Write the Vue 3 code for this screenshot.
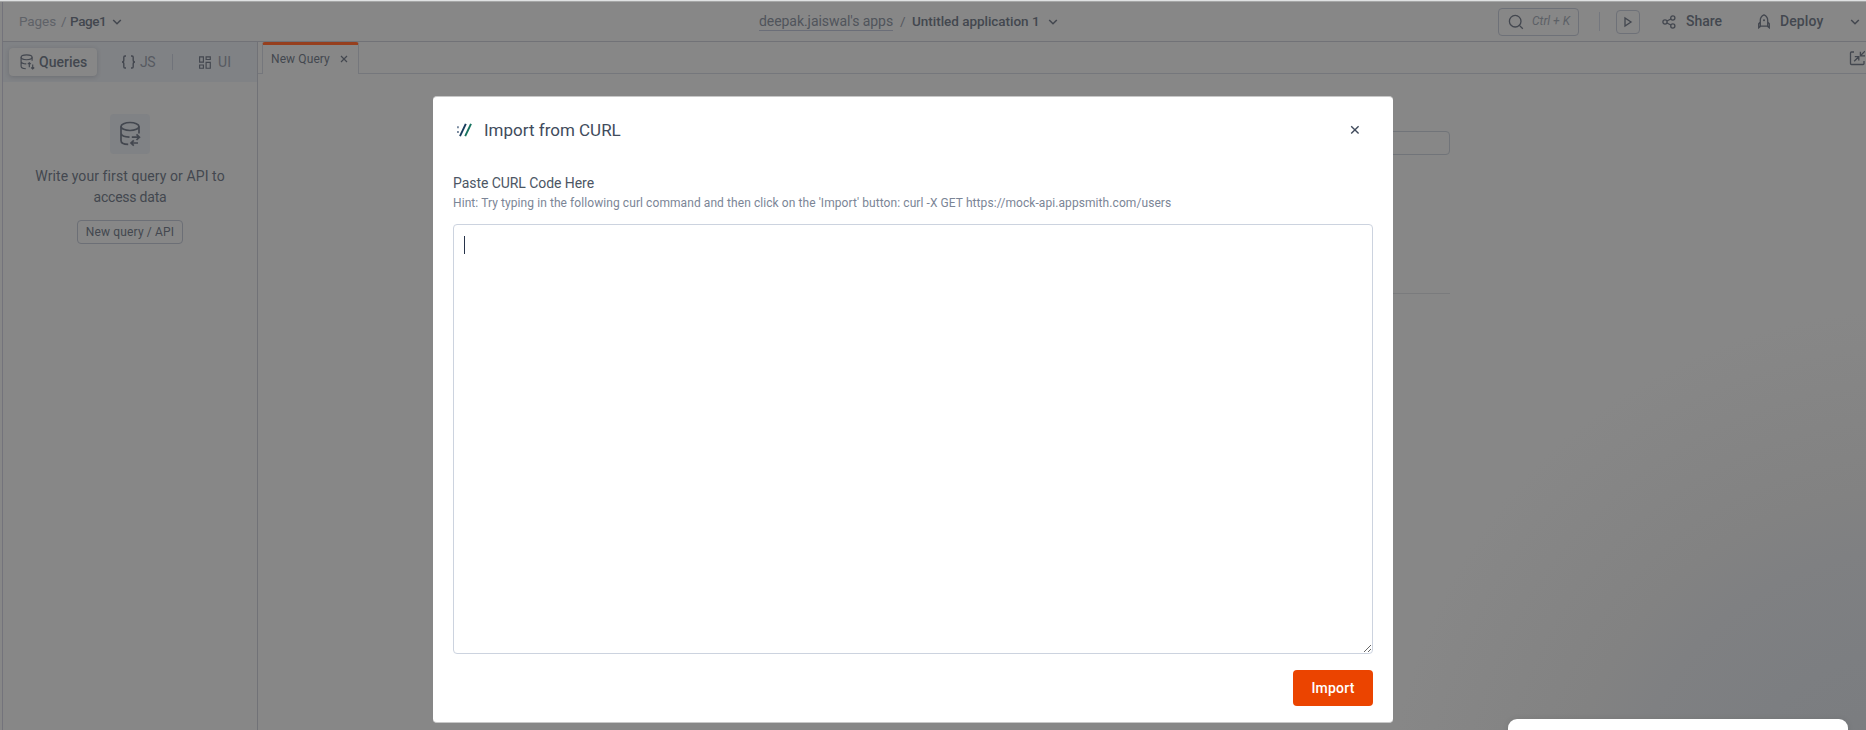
<script setup>
import { ref } from 'vue'
const code = ref('')
</script>

<template>
  <div class="app">
    <div class="edge"></div>
    <header class="header">
      <div class="crumbs">
        <span class="pages">Pages</span><span class="slash">/</span><span class="page1">Page1</span>
        <svg class="chev" width="10" height="8" viewBox="0 0 10 8"><path d="M1.2 2l3.8 3.8L8.8 2" /></svg>
      </div>
      <div class="title">
        <span class="workspace">deepak.jaiswal's apps</span><span class="slash2">/</span><span class="appname">Untitled application 1</span>
        <svg class="chev" width="10" height="8" viewBox="0 0 10 8"><path d="M1.2 2l3.8 3.8L8.8 2" /></svg>
      </div>
      <div class="actions">
        <div class="search">
          <svg width="16" height="16" viewBox="0 0 16 16"><circle cx="7.2" cy="7.2" r="5.8" /><path d="M11.4 11.4l3.4 3.4" /></svg>
          <span>Ctrl + K</span>
        </div>
        <i class="bar"></i>
        <div class="play"><svg width="10" height="12" viewBox="0 0 10 12"><path d="M2 2v8l6-4z" /></svg></div>
        <div class="action share">
          <svg width="14" height="14" viewBox="0 0 14 14"><circle cx="3" cy="7" r="2.1" /><circle cx="10.8" cy="3" r="2.1" /><circle cx="10.8" cy="11" r="2.1" /><path d="M4.9 6l4-2M4.9 8l4 2" /></svg>
          <span>Share</span>
        </div>
        <div class="action deploy">
          <svg width="12" height="15" viewBox="0 0 12 15"><path d="M2.3 12.2V6.3C2.3 3.8 4 1.8 6 .9c2 .9 3.7 2.9 3.7 5.4v5.9zM2.3 8L.7 9.8v4l1.9-1.6M9.7 8l1.6 1.8v4l-1.9-1.6" /><circle class="dot" cx="6" cy="6.3" r="1" /></svg>
          <span>Deploy</span>
        </div>
        <svg class="chev" width="10" height="8" viewBox="0 0 10 8"><path d="M1.2 2l3.8 3.8L8.8 2" /></svg>
      </div>
    </header>

    <div class="body">
      <aside class="sidebar">
        <nav class="segments">
          <div class="seg active">
            <svg width="15" height="16" viewBox="0 0 15 16"><ellipse cx="6.6" cy="3.3" rx="5.5" ry="2.4" /><path d="M1.1 3.3v9c0 1.3 2 2.3 4.7 2.4M12.1 3.3v3.4M1.1 7.7c.3 1.3 2.5 2.2 5.2 2.2M9.3 13.2V8.8M7.8 10.2l1.5-1.5 1.5 1.5M12.7 10.6V15M11.2 13.5l1.5 1.5 1.5-1.5" /></svg>
            <span>Queries</span>
          </div>
          <div class="seg js">
            <svg width="15" height="14" viewBox="0 0 15 14"><path d="M5 1H4Q2.8 1 2.8 2.3v2.9Q2.8 7 1 7q1.8 0 1.8 1.8v2.9Q2.8 13 4 13h1M10 1h1q1.2 0 1.2 1.3v2.9Q12.2 7 14 7q-1.8 0-1.8 1.8v2.9q0 1.3-1.2 1.3h-1" /></svg>
            <span>JS</span>
          </div>
          <i class="segbar"></i>
          <div class="seg ui">
            <svg width="12" height="13" viewBox="0 0 12 13"><path d="M.6.8h3.8v5.3H.6zM7.1.8h4.2v2.7H7.1zM.6 9h3.8v3.2H.6zM7.1 6.4h4.2v5.8H7.1z" /></svg>
            <span>UI</span>
          </div>
        </nav>
        <div class="empty">
          <div class="tile">
            <svg width="22" height="26" viewBox="0 0 22 26"><ellipse cx="11" cy="5.5" rx="9" ry="4" /><path d="M2 5.5v14c0 2 2.6 3.8 7.2 3.9M20 5.5v7M2 12.4c.4 2 3.3 3.6 8.5 3.8M12.8 16.2h7.4M17.5 13.4l2.9 2.8-2.9 2.8M19 22h-7M14.8 19.3L12 22l2.8 2.7" /></svg>
          </div>
          <p><span class="l1">Write your first query or API to</span><br /><span class="l2">access data</span></p>
          <div class="newbtn">New query / API</div>
        </div>
      </aside>

      <main class="main">
        <div class="tabs">
          <div class="tab">
            <span>New Query</span>
            <svg width="8" height="8" viewBox="0 0 8 8"><path d="M1 1l6 6M7 1L1 7" /></svg>
          </div>
          <div class="tabspace">
            <svg class="collapse" width="16" height="16" viewBox="0 0 16 16"><path d="M5 2H2.5Q1.5 2 1.5 3v10.5q0 1 1 1H14q1 0 1-1V11M5.2 11.2L9.5 7M5.8 6.6h4v4M16 1.2l-4.4 4.3M11.4 1.8v4H16" /></svg>
          </div>
        </div>
        <div class="canvas">
          <div class="field"></div>
          <div class="rule"></div>
        </div>
      </main>
    </div>

    <div class="snack"></div>

    <section class="modal">
      <div class="mhead">
        <svg width="17" height="16" viewBox="0 0 17 16"><path class="dots" d="M1 5.2h1.9M1 10h1.9" /><path class="navy" d="M4 14.2L9.8 1.8" /><path class="teal" d="M9.2 14.2L15 1.8" /></svg>
        <h1>Import from CURL</h1>
        <svg class="close" width="10" height="10" viewBox="0 0 10 10"><path d="M1.2 1.2l7.4 7.4M8.6 1.2L1.2 8.6" /></svg>
      </div>
      <label>Paste CURL Code Here</label>
      <p class="hint">Hint: Try typing in the following curl command and then click on the 'Import' button: curl -X GET https://mock-api.appsmith.com/users</p>
      <div class="areawrap">
        <textarea v-model="code" spellcheck="false"></textarea>
        <i class="caret"></i>
      </div>
      <button class="import">Import</button>
    </section>
  </div>
</template>

<style>
html, body { margin: 0; overflow: hidden; background: #878787; }
</style>

<style scoped>
* { box-sizing: border-box; }
.app {
  position: relative; width: 1866px; height: 730px; overflow: hidden; display: flex; flex-direction: column;
  font: 14px/20px Roboto, "Liberation Sans", sans-serif; color: #43474f;
  background: radial-gradient(circle at 1906px 830px, #797b7e 0, #7c7e81 180px, #7f8082 280px, #828282 340px, #878787 520px);
}
svg { display: block; flex: none; fill: none; stroke: #43474f; stroke-width: 1.3; }
.edge { height: 2px; background: #dfe1e2; border-bottom: 1px solid #a5a6a6; flex: none; }
.header { height: 40px; flex: none; margin-left: 2px; border-left: 1px solid #73737b; border-bottom: 1px solid #717277; display: flex; align-items: center; font-size: 13.5px; }
.header span { position: relative; top: -1px; }
.crumbs { display: flex; align-items: center; flex: none; width: 756px; padding-left: 16px; }
.pages { color: #5f6268; width: 42px; letter-spacing: -.1px; }
.slash { color: #5f6268; width: 9px; }
.page1 { width: 42px; font-weight: 500; letter-spacing: -.4px; }
.chev { stroke-width: 1.5; }
.title { display: flex; align-items: center; flex: none; width: 738px; }
.header .workspace { top: 0; font-size: 14px; color: #50545b; line-height: 18px; border-bottom: 1px solid #6b6e78; letter-spacing: -.06px; width: 134px; white-space: nowrap; }
.slash2 { color: #55585e; padding-left: 7px; width: 19px; }
.appname { width: 136px; font-weight: 500; letter-spacing: -.03px; white-space: nowrap; }
.actions { display: flex; align-items: center; flex: none; }
.search { width: 81px; margin-left: 1px; height: 28px; border: 1px solid #6e7178; border-radius: 4px; display: flex; align-items: center; padding-left: 9px; font-size: 12px; font-style: italic; color: #5c6066; }
.search span { margin-left: 8px; white-space: nowrap; }
.bar { width: 1px; height: 19px; background: #74777e; margin-left: 20px; }
.play { width: 24px; height: 24px; border: 1px solid #6e7178; border-radius: 4px; margin-left: 16px; display: flex; align-items: center; justify-content: center; }
.action { display: flex; align-items: center; font-size: 14px; font-weight: 500; }
.share { margin-left: 22px; }
.share span { margin-left: 10px; width: 72px; }
.deploy span { margin-left: 10px; letter-spacing: .1px; width: 70px; }
.dot { fill: #43474f; stroke: none; }

.body { display: flex; flex: 1; margin-left: 2px; border-left: 1px solid #73737b; }
.sidebar { width: 255px; border-right: 1px solid #717277; }
.segments { height: 40px; background: #808285; display: flex; align-items: center; padding-left: 6px; }
.seg { display: flex; align-items: center; color: #575a61; white-space: nowrap; }
.active { width: 88px; height: 28px; background: #878787; border-radius: 4px; padding-left: 11px; color: #43474f; font-weight: 500; box-shadow: 0 1px 4px rgba(40, 45, 55, .22); }
.active span { margin-left: 4px; }
.seg svg { stroke-width: 1.15; }
.js { margin-left: 24px; }
.js svg { stroke-width: 1.4; }
.js span { margin-left: 4px; letter-spacing: -.5px; }
.segbar { width: 1px; height: 16px; background: #70737a; margin-left: 17px; }
.ui { margin-left: 26px; }
.ui span { margin-left: 7px; }
.empty { display: flex; flex-direction: column; align-items: center; padding-top: 32px; }
.tile { width: 40px; height: 40px; border-radius: 4px; background: #808285; display: flex; align-items: center; justify-content: center; }
.tile svg { stroke-width: 1.7; }
.empty p { margin: 12px 0 0; text-align: center; line-height: 21px; }
.l1 { letter-spacing: .09px; }
.l2 { letter-spacing: -.22px; }
.newbtn { margin-top: 12px; width: 106px; height: 24px; border: 1px solid #6c6f76; border-radius: 4px; font-size: 12px; line-height: 23px; text-align: center; letter-spacing: .16px; white-space: nowrap; }

.main { flex: 1; }
.tabs { height: 32px; display: flex; }
.tabs::before { content: ""; width: 4px; border-bottom: 1px solid #75777c; }
.tab { width: 97px; border: 1px solid #75777c; border-top: 3px solid #963f1e; border-bottom: 0; border-radius: 3px 3px 0 0; display: flex; align-items: center; padding: 0 0 1px 8px; font-size: 12px; }
.tab span { width: 69px; letter-spacing: .1px; }
.tab svg { stroke-width: 1.2; }
.tabspace { flex: 1; border-bottom: 1px solid #75777c; display: flex; justify-content: flex-end; align-items: center; }
.collapse { margin-right: 1px; }
.canvas { width: 1192px; padding: 57px 0 0 300px; }
.field { height: 24px; border: 1px solid #717479; border-radius: 4px; }
.rule { height: 1px; background: #7a7b7d; margin-top: 138px; }

.snack { position: absolute; left: 1508px; top: 719px; width: 340px; height: 30px; background: #fff; border-radius: 9px; box-shadow: 0 0 6px rgba(0, 0, 0, .08); }
.modal { position: absolute; left: 433px; top: 96px; width: 960px; height: 627px; background: #fff; border-radius: 4px; padding: 20px 20px 0; display: flex; flex-direction: column; border-top: 1px solid #c8c8c8; border-bottom: 1px solid #c8c8c8; }
.mhead { display: flex; align-items: center; height: 26px; padding-left: 3px; }
h1 { margin: 0 0 0 11px; font-size: 17px; line-height: 26px; font-weight: 400; color: #414b5c; }
.close { margin-left: auto; margin-right: 13px; stroke: #414b5c; stroke-width: 1.4; }
.dots { stroke: #7a8ba0; stroke-width: 2; }
.navy { stroke: #173b5c; stroke-width: 1.9; }
.teal { stroke: #16735f; stroke-width: 1.9; }
label { margin-top: 30px; line-height: 20px; color: #4c5664; letter-spacing: -.06px; }
.hint { margin: 1px 0 0; font-size: 12px; line-height: 18px; color: #7b8596; letter-spacing: .078px; white-space: nowrap; }
.areawrap { position: relative; margin-top: 12px; height: 430px; }
textarea { display: block; width: 920px; height: 430px; border: 1px solid #ccd3df; border-radius: 4px; outline: 0; padding: 10px; background: #fff; font: inherit; resize: both; }
.caret { position: absolute; left: 11px; top: 12px; width: 1px; height: 18px; background: #27334a; }
.import { align-self: flex-end; margin-top: 16px; width: 80px; height: 36px; border: 0; border-radius: 4px; background: #eb4400; color: #fff; font: 500 14px/35px Roboto, sans-serif; padding: 0; letter-spacing: .2px; }
</style>
